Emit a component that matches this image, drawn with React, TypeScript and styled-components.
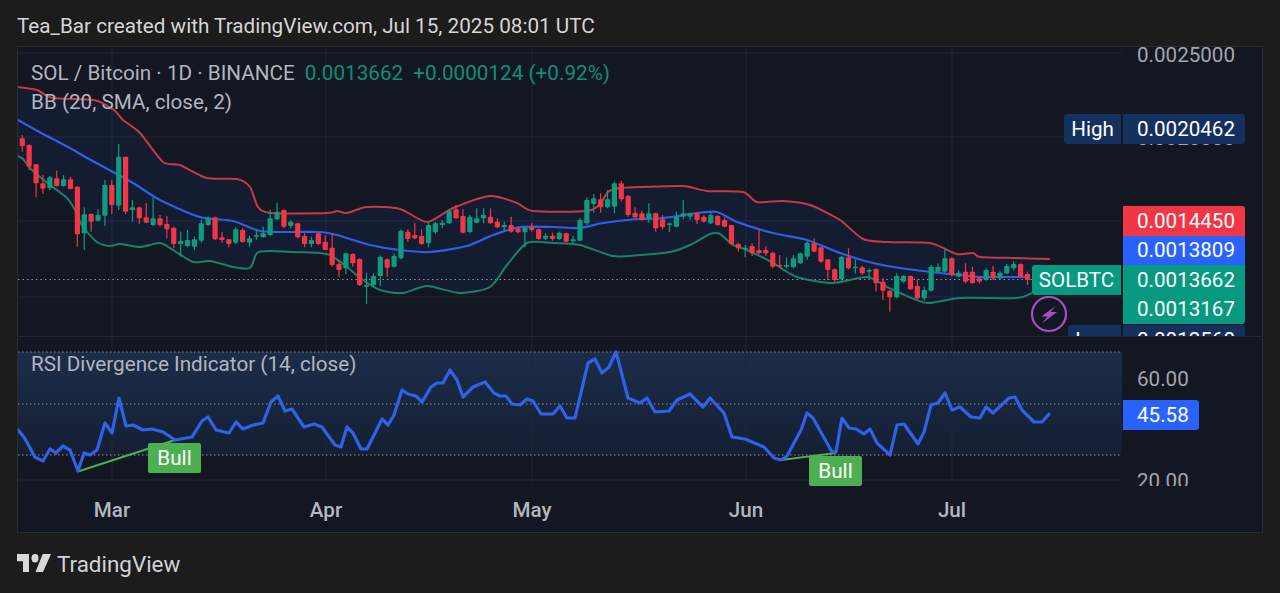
import React from "react";
import styled, { createGlobalStyle } from "styled-components";

const Global = createGlobalStyle`
  html, body { margin: 0; padding: 0; background: #1c1c1c; }
  #root { width: 1280px; height: 593px; overflow: hidden; }
`;

const FONT = `Roboto, "Liberation Sans", sans-serif`;

/* Candles traced from the chart: colour, body top, body bottom, wick top, wick bottom,
   in 3x units from a given y origin. */
const seg1 = `r 55 78 45 95,r 75 140 72 150,r 133 190 133 232,r 190 206 165 222,g 172 205 168 210,r 175 198 152 200,g 178 198 165 200,r 178 207 170 208,r 200 343 198 380,g 283 340 262 390,r 282 305 280 335,g 285 302 268 304,g 195 287 180 318,r 195 255 180 282,g 110 257 72 270,r 110 275 110 282,g 262 270 240 305,r 262 295 260 312,r 292 308 250 310,g 295 315 232 318,r 295 315 285 320,r 312 328 288 355,r 323 372 320 385,g 362 372 335 410,g 360 378 330 382,g 358 380 350 390,g 310 362 298 368,g 293 315 290 318,r 292 358 290 360,r 352 360 336 368,r 358 372 358 382,g 328 368 322 372,r 330 366 325 368,g 355 368 348 380,g 345 350 330 360,g 340 352 320 352,g 295 345 268 348,g 275 298 248 300,r 270 320 268 325,g 305 318 300 325,r 310 352 308 355,r 348 372 340 382,g 360 372 350 382,r 340 372 338 376`;
const seg2 = `r 215 240 195 240,r 233 285 192 290,r 282 300 270 320,g 250 295 248 312,r 252 280 250 290,r 267 345 265 348,g 345 350 308 402,g 318 345 310 350,g 260 318 256 348,r 268 293 265 320,g 258 290 250 292,g 182 265 178 268,r 185 207 178 216,r 195 205 158 208,r 198 222 178 224,g 165 220 158 232,g 160 187 156 192,g 158 165 150 175,g 122 160 120 162,r 118 145 105 146,r 138 188 118 190,g 140 186 135 190,g 145 158 115 160,g 135 145 115 160,r 140 160 115 162,r 155 172 145 175,g 165 172 155 185,r 165 185 140 188,r 175 187 170 190,g 172 187 170 232,r 170 180 158 185,r 178 207 176 210,g 197 206 190 210,r 197 207 188 212,g 188 207 185 210,r 190 215 188 218,g 208 214 198 222,g 150 212 145 214,g 90 160 82 165,g 85 102 72 128,r 88 112 70 128,g 88 112 60 115,g 40 110 35 130,r 40 88 32 95,r 78 135 75 140,r 128 142 112 145`;
const seg3 = `r 130 150 122 152,g 130 148 100 158,r 130 175 128 185,r 148 172 135 178,g 160 165 158 186,g 140 170 125 172,g 130 140 90 148,g 130 140 128 150,r 128 150 128 162,r 140 155 135 158,g 135 160 125 162,r 138 165 135 168,r 150 170 142 172,r 165 222 165 225,r 222 235 218 245,g 233 238 225 262,r 228 250 220 258,r 240 250 178 252,r 240 250 228 258,r 248 290 245 295,r 285 290 255 290,g 285 290 262 295,g 265 292 255 295,g 250 280 248 282,g 218 260 212 270,r 220 245 205 247,r 232 275 230 278,r 268 300 268 330,r 298 330 295 335,g 260 328 258 332,r 262 295 235 298,g 290 295 268 310,r 292 310 288 315,g 300 305 295 330,r 297 340 295 365,r 335 362 325 390,r 362 382 360 425,g 318 382 310 385,g 318 335 315 338,r 318 358 316 360,r 348 385 328 388,g 360 385 350 392,g 290 362 285 365,g 290 305 280 308,g 265 305 235 308,r 265 315 262 320,g 308 320 300 322`;
const seg4 = `r 215 245 190 250,r 215 250 200 250,r 235 245 230 250,g 210 240 205 242,r 215 235 198 240,g 218 235 212 238,g 198 220 192 222,g 192 205 183 212,r 192 230 190 235,r 222 240 215 255`;

type Candle = { x: number; up: boolean; top: number; bot: number; hi: number; lo: number };

const parse = (s: string, y0: number) =>
  s.split(",").map((row) => {
    const [c, a, b, d, e] = row.split(" ");
    return { up: c === "g", top: y0 + +a / 3, bot: y0 + +b / 3, hi: y0 + +d / 3, lo: y0 + +e / 3 };
  });

const candles: Candle[] = [...parse(seg1, 120), ...parse(seg2, 170), ...parse(seg3, 170), ...parse(seg4, 200)].map(
  (c, i) => ({ ...c, x: 22.3 + 6.885 * i })
);

const upper = "18,87 37,90 53,98 94,100 114,110 123,120 140,133 163,162 180,165 207,178 237,179 250,187 258,207 271,213 327,213 337,211 347,213 367,207 400,209 427,222 453,208 490,196 517,203 533,211 587,211 600,204 608,192 620,188 640,187 683,186 707,191 743,192 757,202 783,201 810,205 840,220 863,239 887,242 930,243 957,254 973,253 980,257 1013,258 1050,259";
const middle = "18,120 43,134 70,148 87,158 113,172 133,183 160,200 200,217 233,221 260,231 293,232 320,232 337,235 370,245 400,250 430,252 467,246 493,235 520,227 553,227 580,228 603,223 637,219 663,218 697,213 717,212 737,222 773,233 807,240 840,253 873,263 907,269 940,273 960,275 980,277 1003,277 1030,277";
const lower = "18,156 23,159 30,168 40,177 50,185 67,198 75,210 83,227 97,242 110,246 120,244 140,247 160,243 173,250 193,262 210,261 233,267 250,268 257,253 270,251 293,252 320,253 330,255 347,267 360,278 380,290 403,293 427,286 460,293 490,287 507,265 527,243 553,243 580,245 613,256 640,255 670,252 690,245 710,234 720,234 733,245 747,250 773,263 797,277 833,283 867,277 887,287 900,293 927,303 960,298 1017,298 1032,293";
const rsi = "18,430 24,437 35,457 43,461 50,449 56,453 63,446 70,450 78,471 84,453 90,455 97,450 105,423 112,433 119,398 126,426 133,425 143,430 152,429 163,432 175,440 192,437 202,421 208,417 216,430 229,433 236,422 243,429 253,425 263,423 271,402 278,396 285,411 292,409 304,427 314,424 322,427 335,445 341,447 347,427 353,433 361,449 367,449 382,419 388,425 394,415 402,390 408,394 416,396 422,402 431,387 437,383 443,383 450,370 457,380 463,397 473,387 485,382 494,393 500,396 506,396 512,404 520,405 527,399 533,401 541,414 553,414 560,406 567,418 575,418 588,363 595,359 602,373 609,367 616,352 620,367 628,398 640,403 647,398 655,412 669,411 677,400 690,394 703,407 710,398 724,413 732,437 745,439 764,447 774,458 781,460 787,456 801,430 807,413 813,418 832,452 836,452 842,418 849,428 856,429 864,434 870,429 877,443 890,455 897,425 904,424 918,444 924,432 931,405 938,403 945,393 952,410 960,407 971,417 980,418 986,407 993,413 1009,398 1015,397 1022,410 1034,422 1042,422 1049,414";

const pts = (s: string) => s.split(" ").map((p) => p.split(",").map(Number));
const smooth = (s: string) => {
  const p = pts(s);
  let d = `M${p[0][0]} ${p[0][1]}`;
  for (let i = 0; i < p.length - 1; i++) {
    const a = p[Math.max(i - 1, 0)], b = p[i], c = p[i + 1], e = p[Math.min(i + 2, p.length - 1)];
    d += `C${(b[0] + (c[0] - a[0]) / 8).toFixed(1)} ${(b[1] + (c[1] - a[1]) / 8).toFixed(1)} ${(c[0] - (e[0] - b[0]) / 8).toFixed(1)} ${(c[1] - (e[1] - b[1]) / 8).toFixed(1)} ${c[0]} ${c[1]}`;
  }
  return d;
};
const bandFill = `${upper} ${lower.split(" ").reverse().join(" ")}`;

const months = [
  { label: "Mar", x: 112 },
  { label: "Apr", x: 326 },
  { label: "May", x: 532 },
  { label: "Jun", x: 746 },
  { label: "Jul", x: 952 },
];

/* Page position of the panes' top-left corners, used as the drawings' viewBox origin */
const FX = 18;
const PRICE_TOP = 47;
const RSI_TOP = 337;
const TV = { up: "#0d9c80", down: "#f23645" };
const NAVY = "#14305f";
const GREEN = "#089981";

const Page = styled.div`
  width: 1280px;
  height: 593px;
  background: #1c1c1c;
  display: flex;
  flex-direction: column;
  font-family: ${FONT};
  overflow: hidden;
`;
const Header = styled.div`
  height: 46px;
  flex: none;
  box-sizing: border-box;
  display: flex;
  align-items: center;
  padding: 6px 0 0 17px;
  color: #d6d6d6;
  font-size: 20.7px;
  white-space: nowrap;
`;
const Frame = styled.div`
  width: 1246px;
  height: 487px;
  margin-left: 17px;
  flex: none;
  background: #131722;
  border: 1px solid #2a2c31;
  box-sizing: border-box;
  display: flex;
  flex-direction: column;
`;
const PricePane = styled.div`
  position: relative;
  height: 289px;
  flex: none;
  overflow: hidden;
  border-bottom: 1px solid #262933;
`;
const RsiPane = styled.div`
  position: relative;
  height: 149px;
  flex: none;
  overflow: hidden;
`;
const TimeAxis = styled.div`
  flex: 1;
  display: grid;
  grid-template-columns: 214px 206px 214px 206px 44px;
  align-items: start;
  padding: 12px 0 0 72px;
`;
const Month = styled.span`
  width: 44px;
  text-align: center;
  color: #b4b7bf;
  font-size: 20.6px;
  font-weight: 500;
`;
const Plot = styled.svg`
  position: absolute;
  inset: 0;
  display: block;
`;
const Legend = styled.div`
  position: relative;
  padding: 14px 0 0 13px;
  display: flex;
  flex-direction: column;
  gap: 5px;
  font-size: 20.7px;
  line-height: 24px;
  color: #b2b5be;
  white-space: nowrap;
`;
const LegendRow = styled.div`
  display: flex;
  gap: 10px;
`;
const Teal = styled.span`
  color: #0f8f78;
`;
const RsiTitle = styled.div`
  position: relative;
  padding: 15px 0 0 13px;
  font-size: 20.7px;
  line-height: 24px;
  color: #b2b5be;
  white-space: nowrap;
`;
/* The price scale lies over the right end of the pane; its tags stack by flow. */
const PriceScale = styled.div`
  position: absolute;
  top: -4px;
  right: 17px;
  display: flex;
  flex-direction: column;
  align-items: flex-end;
`;
const ScaleRow = styled.div<{ $gap?: number }>`
  position: relative;
  display: flex;
  gap: 2px;
  margin-top: ${(p) => p.$gap ?? 0}px;
`;
const ScaleText = styled.span`
  display: block;
  width: 122px;
  box-sizing: border-box;
  padding-left: 14px;
  height: 24px;
  line-height: 24px;
  font-size: 20.6px;
  color: #a2a5ad;
`;
const HiddenTick = styled(ScaleText)`
  position: absolute;
  right: 0;
  top: 12px;
`;
const Value = styled.div<{ $bg: string; $r?: string; $w?: number }>`
  position: relative;
  width: ${(p) => p.$w ?? 122}px;
  height: 29.5px;
  box-sizing: border-box;
  padding-left: 14px;
  display: flex;
  align-items: center;
  background: ${(p) => p.$bg};
  border-radius: ${(p) => p.$r ?? "0"};
  color: #fff;
  font-size: 20.6px;
  white-space: nowrap;
`;
const Name = styled.div<{ $bg: string; $w: number }>`
  width: ${(p) => p.$w}px;
  height: 29.5px;
  display: flex;
  align-items: center;
  justify-content: center;
  background: ${(p) => p.$bg};
  border-radius: 3px 0 0 3px;
  color: #fff;
  font-size: 20.6px;
`;
const RsiScale = styled.div`
  position: absolute;
  top: 30px;
  left: ${1123 - FX}px;
  display: flex;
  flex-direction: column;
  align-items: flex-start;
`;
const RsiValue = styled(Value)`
  margin: 9px 0 39px;
  height: 30px;
`;
const Bull = styled.div<{ $x: number; $y: number }>`
  position: absolute;
  left: ${(p) => p.$x - FX}px;
  top: ${(p) => p.$y - RSI_TOP}px;
  width: 53px;
  height: 30px;
  display: flex;
  align-items: center;
  justify-content: center;
  background: #4caf50;
  border-radius: 2px;
  color: #fff;
  font-size: 20.7px;
`;
const Bolt = styled.svg`
  position: absolute;
  left: ${1030 - FX}px;
  top: ${296 - PRICE_TOP}px;
  width: 38px;
  height: 38px;
`;
const Footer = styled.div`
  flex: 1;
  display: flex;
  align-items: center;
  gap: 6px;
  padding: 1px 0 0 17px;
  color: #d1d3d6;
  font-size: 22.4px;
`;
const Logo = styled.svg`
  width: 34px;
  height: 18px;
  display: block;
  margin-top: -2px;
`;

const GRID = "#232733";

export default function App() {
  return (
    <Page>
      <Global />
      <Header>Tea_Bar created with TradingView.com, Jul 15, 2025 08:01 UTC</Header>
      <Frame>
        <PricePane>
          <Plot width={1244} height={289} viewBox={`${FX} ${PRICE_TOP} 1244 289`}>
            {[53, 137, 221, 297].map((y) => (
              <line key={y} x1={FX} x2={1122} y1={y} y2={y} stroke={GRID} />
            ))}
            {months.map((m) => (
              <line key={m.x} x1={m.x} x2={m.x} y1={PRICE_TOP} y2={336} stroke={GRID} />
            ))}
            <polygon points={bandFill} fill="#2962ff" fillOpacity={0.075} />
            <line x1={FX} x2={1032} y1={279.5} y2={279.5} stroke="#8d9a9c" strokeWidth={1.2} strokeDasharray="1.5 3" />
            <path d={smooth(upper)} fill="none" stroke="#c53a47" strokeWidth={2} />
            <path d={smooth(middle)} fill="none" stroke="#2f5fe6" strokeWidth={2.2} />
            <path d={smooth(lower)} fill="none" stroke="#1b8069" strokeWidth={2} />
            {candles.map((c) => (
              <g key={c.x} fill={c.up ? TV.up : TV.down}>
                <rect x={c.x - 0.6} y={c.hi} width={1.2} height={c.lo - c.hi} />
                <rect x={c.x - 2.6} y={c.top} width={5.2} height={Math.max(c.bot - c.top, 1.5)} rx={0.8} />
              </g>
            ))}
          </Plot>
          <Legend>
            <LegendRow>
              <span>SOL / Bitcoin · 1D · BINANCE</span>
              <Teal>0.0013662</Teal>
              <Teal>+0.0000124 (+0.92%)</Teal>
            </LegendRow>
            <span>BB (20, SMA, close, 2)</span>
          </Legend>
          <PriceScale>
            <ScaleText>0.0025000</ScaleText>
            <ScaleRow $gap={47}>
              <HiddenTick>0.0020000</HiddenTick>
              <Name $bg={NAVY} $w={57}>High</Name>
              <Value $bg={NAVY} $r="0 3px 3px 0">0.0020462</Value>
            </ScaleRow>
            <ScaleRow $gap={62.5}>
              <Value $bg="#f23645" $r="0 3px 0 0">0.0014450</Value>
            </ScaleRow>
            <ScaleRow>
              <Value $bg="#2962ff">0.0013809</Value>
            </ScaleRow>
            <ScaleRow>
              <Name $bg={GREEN} $w={89}>SOLBTC</Name>
              <Value $bg={GREEN}>0.0013662</Value>
            </ScaleRow>
            <ScaleRow>
              <Value $bg={GREEN} $r="0 0 3px 0">0.0013167</Value>
            </ScaleRow>
            <ScaleRow $gap={1}>
              <Name $bg={NAVY} $w={53}>Low</Name>
              <Value $bg={NAVY} $r="0 3px 3px 0">0.0012560</Value>
            </ScaleRow>
          </PriceScale>
          <Bolt viewBox="0 0 38 38">
            <circle cx="19" cy="18" r="17" fill="#131722" stroke="#ad4cc0" strokeWidth="2.2" />
            <path d="M26 9.5 L11.5 20.5 H17.5 L12 27.5 L27 16 H20.5 Z" fill="#ad4cc0" />
          </Bolt>
        </PricePane>
        <RsiPane>
          <Plot width={1244} height={149} viewBox={`${FX} ${RSI_TOP} 1244 149`}>
            <defs>
              <linearGradient id="rsiFill" x1="0" y1="0" x2="0" y2="1">
                <stop offset="0" stopColor="#1c2d49" />
                <stop offset="1" stopColor="#141f33" />
              </linearGradient>
            </defs>
            <rect x={FX} y={352} width={1104} height={103} fill="url(#rsiFill)" />
            {[378, 480].map((y) => (
              <line key={y} x1={FX} x2={1122} y1={y} y2={y} stroke={GRID} />
            ))}
            {months.map((m) => (
              <line key={m.x} x1={m.x} x2={m.x} y1={RSI_TOP} y2={482} stroke={GRID} />
            ))}
            {[352, 404, 455].map((y) => (
              <line key={y} x1={FX} x2={1122} y1={y} y2={y} stroke="#8e929b" strokeWidth={1.2} strokeDasharray="1.5 2.5" />
            ))}
            <line x1={78} y1={471.5} x2={175} y2={440} stroke="#4caf50" strokeWidth={2.2} />
            <line x1={781} y1={460} x2={836} y2={453} stroke="#4caf50" strokeWidth={2.2} />
            <polyline points={rsi} fill="none" stroke="#2f62e8" strokeWidth={3.2} strokeLinejoin="round" strokeLinecap="round" />
          </Plot>
          <RsiTitle>RSI Divergence Indicator (14, close)</RsiTitle>
          <RsiScale>
            <ScaleText>60.00</ScaleText>
            <RsiValue $bg="#2962ff" $w={76} $r="0 3px 3px 0">45.58</RsiValue>
            <ScaleText>20.00</ScaleText>
          </RsiScale>
          <Bull $x={148} $y={443}>Bull</Bull>
          <Bull $x={809} $y={456}>Bull</Bull>
        </RsiPane>
        <TimeAxis>
          {months.map((m) => (
            <Month key={m.label}>{m.label}</Month>
          ))}
        </TimeAxis>
      </Frame>
      <Footer>
        <Logo viewBox="2 6 34 15" preserveAspectRatio="none">
          <path fill="#d8d8d8" d="M14 6H2v6h6v9h6V6zm14 15h-7.5l7.2-15H36l-8 15z" />
          <circle fill="#d8d8d8" cx="20" cy="9.5" r="3.5" />
        </Logo>
        <span>TradingView</span>
      </Footer>
    </Page>
  );
}
